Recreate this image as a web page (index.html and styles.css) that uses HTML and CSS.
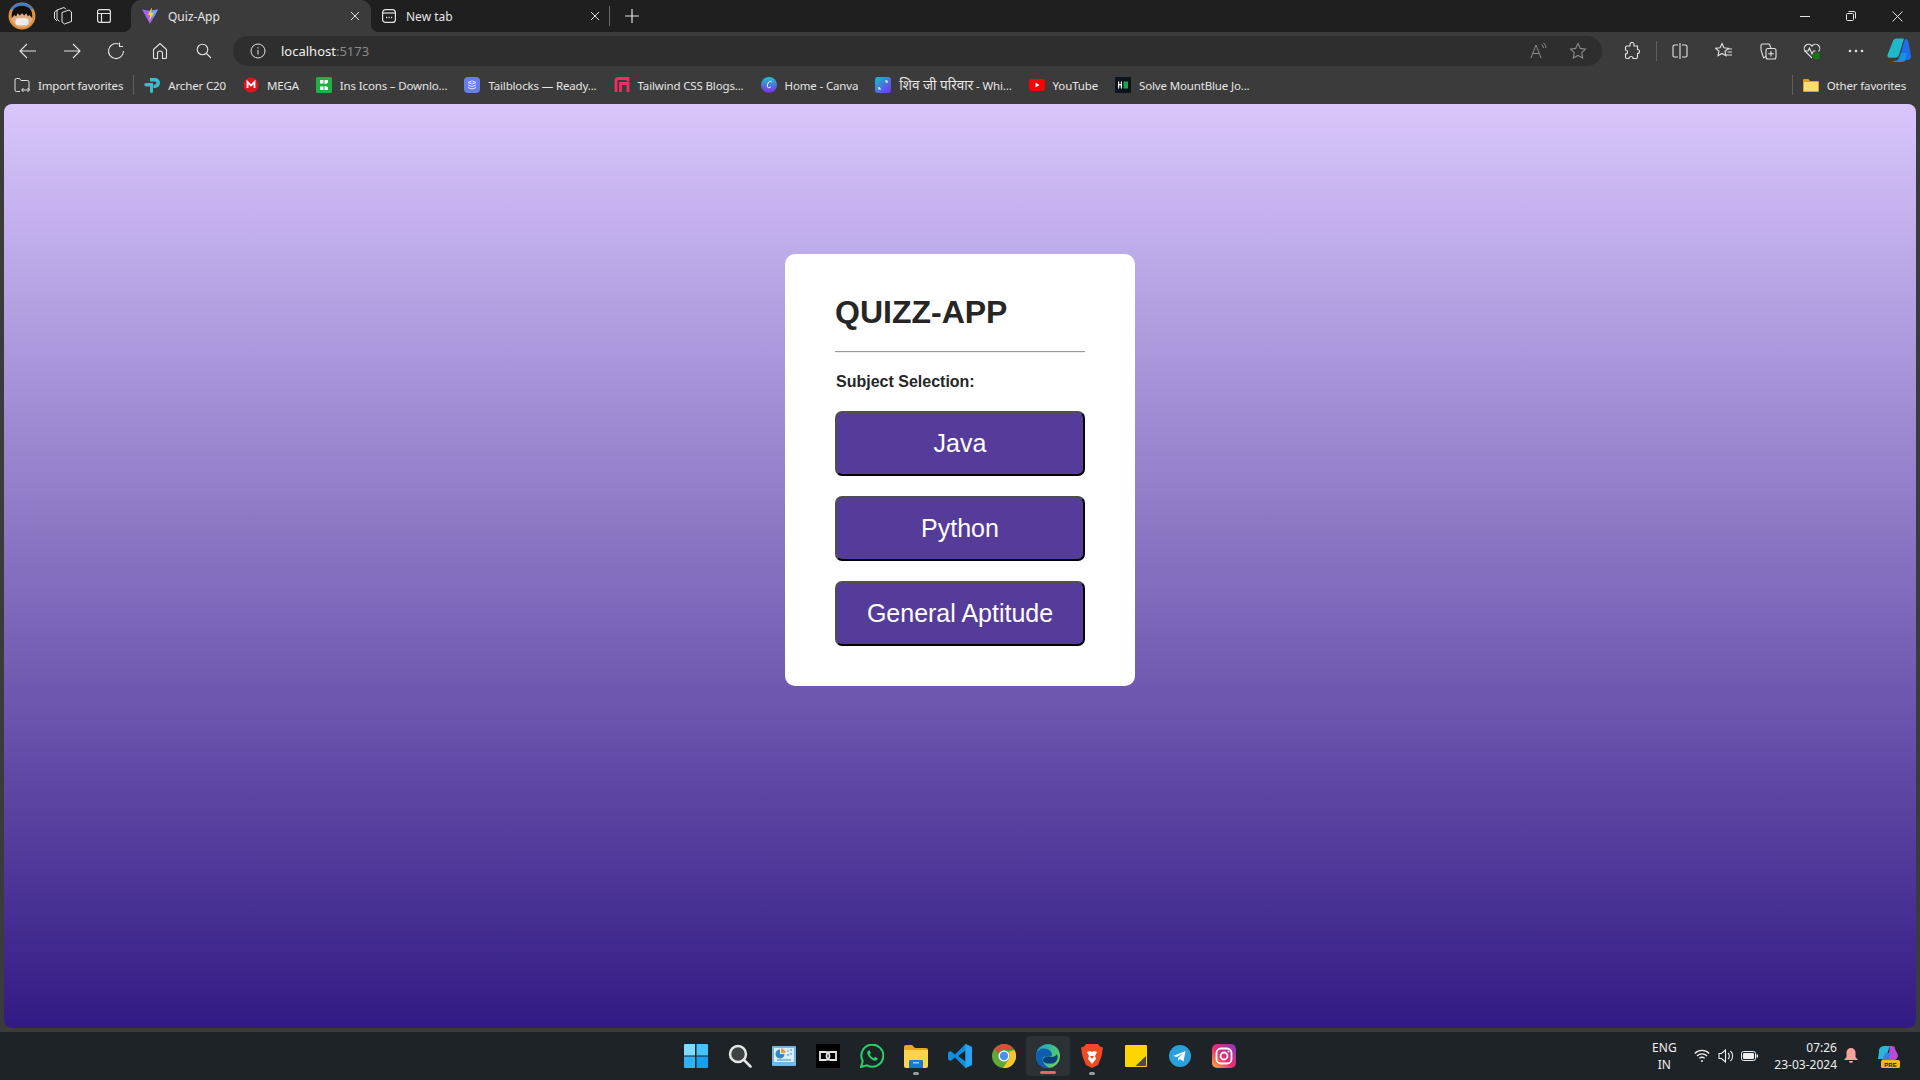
FILE: index.html
```html
<!DOCTYPE html>
<html lang="en">
<head>
    <meta charset="UTF-8">
    <meta name="viewport" content="width=device-width, initial-scale=1.0">
    <title>Quiz-App</title>
    <link rel="stylesheet" href="styles.css">
</head>
<body>
    <!-- title bar -->
    <div class="tabstrip">
        <div class="strip-btn strip-avatar">
            <svg width="28" height="28" viewBox="0 0 26 26"><circle cx="13" cy="13" r="12.500" fill="#e0913a"/><path d="M2.200 7a12.500 12.500 0 0 1 21.600 0z" fill="#3d7ecb"/><circle cx="13" cy="13.500" r="10" fill="#e2ad85"/><path d="M3.500 15c-1-8 3.500-11.500 9.500-11.500S23.500 7 22.500 15l-2.500-3-1.500 1.500-1.500-3-2 2-2-2-2 2-2-2-1.500 3-1.500-1.500z" fill="#15100e"/><rect x="7" y="15" width="12" height="6.500" rx="2.500" fill="#ececec"/></svg>
        </div>
        <div class="strip-btn">
            <svg width="20" height="20" viewBox="0 0 20 20" fill="none" stroke="#e3e3e3" stroke-width="1"><path d="M9 6.500l7-2.500 2.500 2v9.500l-7 2.500-2.500-2z"/><path d="M6.500 15.500L4 13V4l7-2.500 2 1.700"/><path d="M4 15l-2.500-2.500V6L4 4"/></svg>
        </div>
        <div class="strip-btn">
            <svg width="16" height="16" viewBox="0 0 16 16" fill="none" stroke="#e3e3e3" stroke-width="1.200"><rect x="1.600" y="1.600" width="12.800" height="12.800" rx="2"/><path d="M1.600 5.500h12.800M5.500 5.500v8.900"/></svg>
        </div>
        <div class="tab tab-active">
            <svg class="tab-icon" width="18" height="18" viewBox="0 0 18 18"><path d="M1 2.500l8 1.300 8-1.300L9 17z" fill="#9d63f5"/><path d="M9 3.800l8-1.300-5 8.700z" fill="#6fa8f7"/><path d="M10.500 1L6.800 8l2.400.3-.9 6 4.200-8-2.500-.3 1-5z" fill="#ffd02e"/></svg>
            <span class="tab-title">Quiz-App</span>
            <svg class="tab-close" width="10" height="10" viewBox="0 0 10 10" stroke="#e3e3e3" stroke-width="1"><path d="M1 1l8 8M9 1l-8 8"/></svg>
        </div>
        <div class="tab">
            <svg class="tab-icon" width="16" height="16" viewBox="0 0 16 16" fill="none" stroke="#e3e3e3" stroke-width="1.200"><rect x="1.600" y="1.600" width="12.800" height="12.800" rx="3"/><path d="M1.600 5h12.800"/><path d="M5 9.500h1.200M7.500 9.500h1.200M10 9.500h1.200" stroke-width="1.500"/></svg>
            <span class="tab-title">New tab</span>
            <svg class="tab-close" width="10" height="10" viewBox="0 0 10 10" stroke="#e3e3e3" stroke-width="1"><path d="M1 1l8 8M9 1l-8 8"/></svg>
        </div>
        <div class="tab-sep"></div>
        <div class="new-tab">
            <svg width="14" height="14" viewBox="0 0 14 14" stroke="#e3e3e3" stroke-width="1.200"><path d="M7 0v14M0 7h14"/></svg>
        </div>
        <div class="window-btns">
            <div class="window-btn"><svg width="10" height="10" viewBox="0 0 10 10" stroke="#e3e3e3"><path d="M0 5.500h10"/></svg></div>
            <div class="window-btn"><svg width="10" height="10" viewBox="0 0 10 10" fill="none" stroke="#e3e3e3"><rect x="0.500" y="2.500" width="7" height="7" rx="1"/><path d="M2.500 .5h5.500a1.500 1.500 0 0 1 1.500 1.500v5.500"/></svg></div>
            <div class="window-btn"><svg width="11" height="11" viewBox="0 0 11 11" stroke="#e3e3e3"><path d="M.5 .5l10 10M10.500 .5l-10 10"/></svg></div>
        </div>
    </div>

    <!-- address bar -->
    <div class="toolbar">
        <div class="tool-btn"><svg width="18" height="16" viewBox="0 0 18 16" fill="none" stroke="#e3e3e3" stroke-width="1.100"><path d="M17 8H1M8 1L1 8l7 7"/></svg></div>
        <div class="tool-btn"><svg width="18" height="16" viewBox="0 0 18 16" fill="none" stroke="#e3e3e3" stroke-width="1.100"><path d="M1 8h16M10 1l7 7-7 7"/></svg></div>
        <div class="tool-btn"><svg width="18" height="18" viewBox="0 0 18 18" fill="none" stroke="#e3e3e3" stroke-width="1.100"><path d="M11.500 2A7.500 7.500 0 1 0 16.500 9"/><path d="M12.500 .5V4.500H16"/></svg></div>
        <div class="tool-btn"><svg width="18" height="18" viewBox="0 0 18 18" fill="none" stroke="#e3e3e3" stroke-width="1.100"><path d="M2.500 7.500L9 1.500l6.500 6v8a1 1 0 0 1-1 1h-3v-5a2.500 2.500 0 0 0-5 0v5h-3a1 1 0 0 1-1-1z"/></svg></div>
        <div class="tool-btn"><svg width="16" height="16" viewBox="0 0 16 16" fill="none" stroke="#e3e3e3" stroke-width="1.100"><circle cx="6.500" cy="6.500" r="5.300"/><path d="M10.500 10.500L15 15"/></svg></div>
        <div class="address">
            <svg width="16" height="16" viewBox="0 0 16 16" fill="none" stroke="#e3e3e3" stroke-width="1"><circle cx="8" cy="8" r="7"/><path d="M8 7v4.500M8 4.200v1.300"/></svg>
            <span class="url">localhost<span class="url-port">:5173</span></span>
            <div class="address-end">
                <svg width="18" height="18" viewBox="0 0 18 18" fill="none" stroke="#8a8a8a" stroke-width="1"><path d="M1 16L6 3l5 13M2.800 11.500h6.400M11.500 2.500a5 5 0 0 1 2 3.500M13.500 1a7 7 0 0 1 2.500 5"/></svg>
                <svg width="18" height="18" viewBox="0 0 18 18" fill="none" stroke="#8a8a8a" stroke-width="1.100"><path d="M9 1.500l2.300 4.900 5.200.7-3.800 3.600 1 5.300L9 13.400 4.300 16l1-5.300L1.500 7.100l5.200-.7z"/></svg>
            </div>
        </div>
        <div class="tool-btn"><svg width="18" height="18" viewBox="0 0 18 18" fill="none" stroke="#e3e3e3" stroke-width="1.100"><path d="M7 2.500a2 2 0 0 1 4 0V4h3.500v3.500a2 2 0 0 1 0 4V15a1.500 1.500 0 0 1-1.500 1.500H10a2 2 0 0 0-4 0H4A1.500 1.500 0 0 1 2.500 15v-3a2 2 0 0 0 0-4V5.500A1.500 1.500 0 0 1 4 4h3z"/></svg></div>
        <div class="tool-sep"></div>
        <div class="tool-btn"><svg width="16" height="16" viewBox="0 0 16 16" fill="none" stroke="#e3e3e3" stroke-width="1.100"><path d="M8 0v16M6 2H2.500A1.500 1.500 0 0 0 1 3.500v9A1.500 1.500 0 0 0 2.500 14H6M10 2h3.500A1.500 1.500 0 0 1 15 3.500v9a1.500 1.500 0 0 1-1.500 1.500H10"/></svg></div>
        <div class="tool-btn"><svg width="18" height="18" viewBox="0 0 18 18" fill="none" stroke="#e3e3e3" stroke-width="1.100"><path d="M7 1.500l1.900 4.300 4.400.5-3.300 3 1 4.400L7 11.400l-4 2.300 1-4.400-3.300-3 4.400-.5zM12 7h5M12.500 10h4.500M11.500 13h5.500"/></svg></div>
        <div class="tool-btn"><svg width="18" height="18" viewBox="0 0 18 18" fill="none" stroke="#e3e3e3" stroke-width="1.100"><path d="M7 14.500l-2.500 1.300L2 8V3.500A1.500 1.500 0 0 1 3.500 2h6.800L12 6"/><rect x="7" y="6.500" width="10" height="10.500" rx="2"/><path d="M12 9v5.500M9.200 11.800h5.600"/></svg></div>
        <div class="tool-btn"><svg width="18" height="18" viewBox="0 0 18 18" fill="none" stroke="#e3e3e3" stroke-width="1.100"><path d="M9 16L2.500 9.500a4.200 4.200 0 0 1 6-6l.5.700.5-.7a4.200 4.200 0 0 1 6 6"/><path d="M1 9h4l1.500-3 2.500 6 1.500-3h2"/><circle cx="13.500" cy="14" r="3.500" fill="#107c10" stroke="none"/></svg></div>
        <div class="tool-btn"><svg width="16" height="4" viewBox="0 0 16 4" fill="#e3e3e3"><circle cx="2" cy="2" r="1.300"/><circle cx="8" cy="2" r="1.300"/><circle cx="14" cy="2" r="1.300"/></svg></div>
        <div class="tool-btn copilot-btn"><svg width="24" height="26" viewBox="0 0 24 26"><path d="M6 3a3 3 0 0 1 3-2.500h8L12 17a4 4 0 0 1-3.500 2.800H2.500a2.500 2.500 0 0 1-2-3z" fill="#1fb8c8"/><path d="M18 1c2 0 3 1 3.400 3L24 18a4 4 0 0 1-4 4h-8l5-18z" fill="#1c6fe8"/><path d="M5 24h10a4 4 0 0 0 4-3l1-6-6 0-3 7z" fill="#1a8fe8"/></svg></div>
    </div>

    <!-- favorites bar -->
    <div class="bookmarks">
        <div class="bookmark bookmark-import">
            <svg width="16" height="16" viewBox="0 0 16 16" fill="none" stroke="#e3e3e3" stroke-width="1"><path d="M6 14.500H2.500A1.500 1.500 0 0 1 1 13V3a1.500 1.500 0 0 1 1.500-1.500h3L7 3.500h6.500A1.500 1.500 0 0 1 15 5v8"/><path d="M8 13h7M9.500 11L7.500 13l2 2M13.500 11l2 2-2 2"/></svg>
            <span>Import favorites</span>
        </div>
        <div class="bookmark-sep"></div>
        <div class="bookmark">
            <svg width="16" height="16" viewBox="0 0 16 16"><path d="M6 1h5a5 5 0 0 1 0 10H9.500V7.500H11a1.500 1.500 0 0 0 0-3H6z" fill="#35c0d0"/><path d="M6 6h3v8.500a1.500 1.500 0 0 1-3 0V9.500H2a1.700 1.700 0 0 1 0-3.500z" fill="#35c0d0"/></svg>
            <span>Archer C20</span>
        </div>
        <div class="bookmark">
            <svg width="16" height="16" viewBox="0 0 16 16"><circle cx="8" cy="8" r="7.500" fill="#e3131b"/><path d="M4.500 11V5L8 8.500 11.500 5v6" fill="none" stroke="#fff" stroke-width="1.800"/></svg>
            <span>MEGA</span>
        </div>
        <div class="bookmark">
            <svg width="16" height="16" viewBox="0 0 16 16"><rect width="16" height="16" rx="1.500" fill="#1fb141"/><path d="M4 3h3.500v3.500H4zM8.500 3H12v3h-1.500v1H8.500zM4 9.500h3.500V13H4zM8.500 9h2v1H12v3H8.500z" fill="#fff"/></svg>
            <span>Ins Icons – Downlo...</span>
        </div>
        <div class="bookmark">
            <svg width="16" height="16" viewBox="0 0 16 16"><rect width="16" height="16" rx="4" fill="#667eea"/><path d="M4 5.500L8 4l4 1.500L8 7zM4 8l4 1.500L12 8M4 10.500L8 12l4-1.500" fill="none" stroke="#e5e9ff" stroke-width="1"/></svg>
            <span>Tailblocks — Ready...</span>
        </div>
        <div class="bookmark">
            <svg width="16" height="16" viewBox="0 0 16 16" fill="none" stroke="#f02e65" stroke-width="2.800"><path d="M2 15V3.500A2 2 0 0 1 4 1.500h10v3"/><path d="M6.500 15V6.500H14V15"/></svg>
            <span>Tailwind CSS Blogs...</span>
        </div>
        <div class="bookmark">
            <svg width="16" height="16" viewBox="0 0 16 16"><defs><linearGradient id="canva-fill" x1="0" y1="0" x2="0" y2="1"><stop offset="0" stop-color="#20c4cb"/><stop offset="1" stop-color="#7d2ae8"/></linearGradient></defs><circle cx="8" cy="8" r="8" fill="url(#canva-fill)"/><path d="M10.500 5c-.5-1-2-.8-3 .5s-1.500 3.500-.8 4.700c.7 1 2.300.5 3.300-.5" fill="none" stroke="#fff" stroke-width="1"/></svg>
            <span>Home - Canva</span>
        </div>
        <div class="bookmark">
            <svg width="16" height="16" viewBox="0 0 16 16"><defs><linearGradient id="shiv-fill" x1="0" y1="0" x2="1" y2="1"><stop offset="0" stop-color="#12c2c9"/><stop offset="1" stop-color="#7a2ff0"/></linearGradient></defs><rect width="16" height="16" rx="3" fill="url(#shiv-fill)"/><path d="M10 4h2v2M4 10v2h2" fill="none" stroke="#fff" stroke-width="1.200"/></svg>
            <span><span class="hindi">शिव जी परिवार</span> - Whi...</span>
        </div>
        <div class="bookmark">
            <svg width="16" height="16" viewBox="0 0 16 16"><rect y="2" width="16" height="12" rx="3" fill="#f00"/><path d="M6.500 5.500v5l4-2.500z" fill="#fff"/></svg>
            <span>YouTube</span>
        </div>
        <div class="bookmark">
            <svg width="16" height="16" viewBox="0 0 16 16"><rect width="16" height="16" fill="#0e141e"/><path d="M3 4.500h1.200v2.600h1.600V4.500H7v7H5.800V8.400H4.200v3.100H3z" fill="#fff"/><rect x="8.500" y="4.500" width="4.500" height="7" fill="#1ba94c"/></svg>
            <span>Solve MountBlue Jo...</span>
        </div>
        <div class="bookmark-other">
            <div class="bookmark-sep"></div>
            <div class="bookmark">
                <svg width="16" height="16" viewBox="0 0 16 16"><path d="M0 3a1 1 0 0 1 1-1h4.500L7 4h8a1 1 0 0 1 1 1v9a1 1 0 0 1-1 1H1a1 1 0 0 1-1-1z" fill="#d9a125"/><rect x="1" y="5" width="14" height="9" rx=".5" fill="#ffdb74"/></svg>
                <span>Other favorites</span>
            </div>
        </div>
    </div>

    <!-- page -->
    <div class="viewport">
        <div class="quiz-card">
            <h1 class="quiz-title">QUIZZ-APP</h1>
            <hr class="quiz-rule">
            <p class="quiz-label">Subject Selection:</p>
            <div class="subject-list">
                <button class="subject-btn">Java</button>
                <button class="subject-btn">Python</button>
                <button class="subject-btn">General Aptitude</button>
            </div>
        </div>
    </div>

    <!-- taskbar -->
    <div class="taskbar">
        <div class="task-icons">
            <div class="task-icon"><svg width="24" height="24" viewBox="0 0 24 24"><path d="M0 1a1 1 0 0 1 1-1h10v11.500H0z" fill="#7fdcff"/><path d="M12.500 0H23a1 1 0 0 1 1 1v10.500H12.500z" fill="#45c4fb"/><path d="M0 12.500h11V24H1a1 1 0 0 1-1-1z" fill="#2cb4f5"/><path d="M12.500 12.500H24V23a1 1 0 0 1-1 1H12.500z" fill="#13a0ee"/></svg></div>
            <div class="task-icon"><svg width="24" height="24" viewBox="0 0 24 24" fill="none"><circle cx="10" cy="10" r="8" fill="#3c4245" stroke="#e6e6e6" stroke-width="2.500"/><path d="M16 16l6.500 6.500" stroke="#e6e6e6" stroke-width="2.500" stroke-linecap="round"/></svg></div>
            <div class="task-icon"><svg width="24" height="20" viewBox="0 0 24 20"><rect width="24" height="20" rx="1" fill="#6fb8e8"/><rect x="2" y="2" width="20" height="14" fill="#d8eefa"/><path d="M8 3.500a4.500 4.500 0 1 0 4.500 4.500H8z" fill="#2f8ac8"/><path d="M9 2.500a4.500 4.500 0 0 1 4.500 4.500H9z" fill="#f39c2c"/><path d="M15 5h1.500M18 4h2M15 9h2M18 8h2M5 14h14" stroke="#3a8fcc"/></svg></div>
            <div class="task-icon"><svg width="24" height="24" viewBox="0 0 24 24"><rect width="24" height="24" fill="#000"/><path d="M4 8h5.500a4 4 0 0 1 0 8H4zM20 8h-5.500a4 4 0 0 0 0 8H20z" fill="none" stroke="#e6e6e6" stroke-width="1.800"/></svg></div>
            <div class="task-icon"><svg width="24" height="24" viewBox="0 0 24 24"><path d="M1 23l1.700-6A11 11 0 1 1 7 21.300z" fill="none" stroke="#25d366" stroke-width="2"/><path d="M8.500 6.500c-1 .5-1.500 2-1 3.500 1 3 3.500 5.500 6.500 6.500 1.500.5 3 0 3.500-1.200.2-.6.2-1 0-1.200l-2.500-1.200-1.200 1.300c-1.700-.6-3.300-2.200-4-4l1.100-1.100-1.100-2.600z" fill="#25d366"/></svg></div>
            <div class="task-icon task-open"><svg width="24" height="23" viewBox="0 0 24 23"><path d="M0 2a2 2 0 0 1 2-2h6l3 3h11a2 2 0 0 1 2 2v3H0z" fill="#e8a820"/><path d="M0 5h24v16a2 2 0 0 1-2 2H2a2 2 0 0 1-2-2z" fill="#ffd34e"/><path d="M6 15h12a1 1 0 0 1 1 1v7H5v-7a1 1 0 0 1 1-1z" fill="#1a78d0"/><rect x="9" y="17" width="6" height="1.500" fill="#8fd0f8"/></svg></div>
            <div class="task-icon"><svg width="24" height="24" viewBox="0 0 24 24"><path d="M17.500 0L24 3v18l-6.500 3L7 13.500 2.500 17 0 15.500V8.500L2.500 7 7 10.500z" fill="#0f8ee0"/><path d="M17.500 6.500v11L10 12z" fill="#1d2326"/><path d="M17.500 0L24 3v18l-6.500 3z" fill="#28a5f0"/></svg></div>
            <div class="task-icon"><svg width="24" height="24" viewBox="0 0 24 24"><circle cx="12" cy="12" r="12" fill="#5fa83a"/><path d="M12 0a12 12 0 0 1 10.400 6H12a6 6 0 0 0-5.600 3.800L2.600 5.500A12 12 0 0 1 12 0z" fill="#e04a3a"/><path d="M22.400 6A12 12 0 0 1 11 24l5.200-7.800A6 6 0 0 0 16.500 8z" fill="#fbc52d"/><circle cx="12" cy="12" r="5.500" fill="#fff"/><circle cx="12" cy="12" r="4.200" fill="#4a8ff0"/></svg></div>
            <div class="task-icon task-active">
                <svg width="24" height="24" viewBox="0 0 24 24"><defs><linearGradient id="edge-fill" x1="0" y1="0" x2="1" y2="0.600"><stop offset="0" stop-color="#0f9fd8"/><stop offset="1" stop-color="#5fd35a"/></linearGradient></defs><circle cx="12" cy="12" r="12" fill="url(#edge-fill)"/><path d="M0 12c0-5 4-7.500 8-7.500 5 0 8 3.500 8 6 0 1.500-1.500 2.500-3.500 2.500-2.500 0-6-1-6 2.500 0 3 3 6.500 7 8.500-7 1.500-13.500-4-13.500-12z" fill="#0c5fb0"/><path d="M7 16c0-4 5-3 8-3 3 0 5-1 6-3 2 5-1 9-4.500 9.500C11 20 7 19 7 16z" fill="#0b3f7c"/></svg>
            </div>
            <div class="task-icon task-open"><svg width="24" height="24" viewBox="0 0 24 24"><path d="M6 0h12l2 2.500 3 1-1.500 9L18 21l-6 3-6-3-3.500-8.500L1 3.500l3-1z" fill="#f04a23"/><path d="M7 8l3-1 2 1 2-1 3 1-2 4 1 3-4 5-4-5 1-3z" fill="#fff"/><path d="M10 12h4l-2 3z" fill="#f04a23"/></svg></div>
            <div class="task-icon"><svg width="22" height="22" viewBox="0 0 22 22"><rect width="22" height="22" rx="1" fill="#ffd500"/><path d="M21 11v10H10.500z" fill="#4a4a4a"/></svg></div>
            <div class="task-icon"><svg width="22" height="22" viewBox="0 0 22 22"><circle cx="11" cy="11" r="11" fill="#2aa1da"/><path d="M4 11l12.500-5-2 10.500-3.500-2.500-2 1.800.2-3 5-4.500-6.300 3.800z" fill="#fff"/></svg></div>
            <div class="task-icon"><svg width="24" height="24" viewBox="0 0 24 24"><defs><linearGradient id="ig-fill" x1="0" y1="1" x2="1" y2="0"><stop offset="0" stop-color="#fdb53a"/><stop offset="0.450" stop-color="#ee2a6f"/><stop offset="1" stop-color="#7a3fc8"/></linearGradient></defs><rect width="24" height="24" rx="5" fill="url(#ig-fill)"/><rect x="4.500" y="4.500" width="15" height="15" rx="4.500" fill="none" stroke="#fff" stroke-width="1.800"/><circle cx="12" cy="12" r="3.500" fill="none" stroke="#fff" stroke-width="1.800"/><circle cx="16.500" cy="7.500" r="1" fill="#fff"/></svg></div>
        </div>
        <div class="tray">
            <div class="tray-lang">ENG<br>IN</div>
            <svg class="tray-wifi" width="16" height="14" viewBox="0 0 16 14" fill="none" stroke="#f0f0f0" stroke-width="1.300"><path d="M.8 4.500a10 10 0 0 1 14.400 0M3 7a7 7 0 0 1 10 0M5.300 9.400a3.800 3.800 0 0 1 5.400 0"/><circle cx="8" cy="12" r="1" fill="#f0f0f0" stroke="none"/></svg>
            <svg class="tray-sound" width="17" height="14" viewBox="0 0 17 14" fill="none" stroke="#f0f0f0" stroke-width="1.100"><path d="M1 4.500h2.500L7.500 1v12L3.500 9.500H1zM10 4a4 4 0 0 1 0 6M12.500 2a7 7 0 0 1 0 10"/></svg>
            <svg class="tray-battery" width="17" height="10" viewBox="0 0 17 10"><rect x=".5" y=".5" width="14" height="9" rx="2" fill="none" stroke="#f0f0f0"/><rect x="2" y="2" width="11" height="6" rx="1" fill="#f0f0f0"/><rect x="15.500" y="3.500" width="1.500" height="3" fill="#f0f0f0"/></svg>
            <div class="tray-clock">07:26<br>23-03-2024</div>
            <svg class="tray-bell" width="14" height="16" viewBox="0 0 14 16" fill="#f9a298"><path d="M7 0a4.500 4.500 0 0 1 4.500 4.500V9l2.500 3H0l2.500-3V4.500A4.500 4.500 0 0 1 7 0zM5 13h4a2 2 0 0 1-4 0z"/></svg>
            <svg class="tray-copilot" width="24" height="24" viewBox="0 0 24 24"><path d="M3 8a5 5 0 0 1 5-6h6l-5 13H2z" fill="#28b8d8"/><path d="M14 2h2a3 3 0 0 1 3 3l3 6c0 3-2 5-4 5h-6z" fill="#c04ad8"/><path d="M9 9h6l-2 7H6z" fill="#3c7ee8"/><rect x="5" y="16" width="19" height="8" rx="1.500" fill="#f5b81e"/><text x="14.500" y="22.500" text-anchor="middle" class="pre-text">PRE</text></svg>
        </div>
    </div>
</body>
</html>
```

FILE: styles.css
```css
* {
    box-sizing: border-box;
}
body {
    margin: 0;
    height: 100vh;
    overflow: hidden;
    display: flex;
    flex-direction: column;
    background: #3b3b3b;
    color: #e6e6e6;
    font-family: "Noto Sans", "Liberation Sans", sans-serif;
    font-size: 12px;
}
svg {
    display: block;
    flex: none;
}

/* tab strip */
.tabstrip {
    display: flex;
    align-items: center;
    height: 32px;
    flex: none;
    background: #1f1f1f;
}
.strip-btn {
    width: 41px;
    height: 32px;
    display: flex;
    align-items: center;
    justify-content: center;
}
.strip-avatar {
    margin-left: 1px;
}
.tab {
    position: relative;
    width: 240px;
    height: 32px;
    display: flex;
    align-items: center;
    padding: 0 11px 0 10px;
}
.tab-active {
    margin-left: 7px;
    background: #3b3b3b;
    border-radius: 10px 10px 0 0;
}
.tab-active::before,
.tab-active::after {
    content: "";
    position: absolute;
    bottom: 0;
    width: 8px;
    height: 8px;
}
.tab-active::before {
    left: -8px;
    background: radial-gradient(circle at 0 0, #1f1f1f 8px, #3b3b3b 8.5px);
}
.tab-active::after {
    right: -8px;
    background: radial-gradient(circle at 100% 0, #1f1f1f 8px, #3b3b3b 8.5px);
}
.tab-title {
    flex: 1;
    margin-left: 9px;
}
.tab-sep {
    width: 1px;
    height: 20px;
    margin-left: -2px;
    background: #6a6a6a;
}
.new-tab {
    width: 44px;
    display: flex;
    justify-content: center;
}
.window-btns {
    display: flex;
    margin-left: auto;
}
.window-btn {
    width: 46px;
    height: 32px;
    display: flex;
    align-items: center;
    justify-content: center;
}

/* toolbar */
.toolbar {
    display: flex;
    align-items: center;
    height: 34px;
    flex: none;
    padding: 4px 0 0 6px;
    background: #3b3b3b;
}
.tool-btn {
    width: 44px;
    height: 30px;
    flex: none;
    display: flex;
    align-items: center;
    justify-content: center;
}
.copilot-btn {
    width: 42px;
}
.address {
    flex: 1;
    height: 30px;
    margin: 0 8px 0 7px;
    padding: 0 15px 0 17px;
    display: flex;
    align-items: center;
    background: #2e2e2e;
    border-radius: 15px;
}
.url {
    margin-left: 15px;
    font-size: 13px;
    color: #f0f0f0;
}
.url-port {
    color: #8a8a8a;
}
.address-end {
    margin-left: auto;
    display: flex;
    gap: 21px;
}
.tool-sep {
    width: 1px;
    height: 20px;
    margin: 0 1px 0 2px;
    background: #5f5f5f;
}

/* favorites */
.bookmarks {
    display: flex;
    align-items: center;
    gap: 17px;
    height: 38px;
    flex: none;
    padding: 0 14px 0 14px;
    background: #3b3b3b;
    font-size: 11.5px;
    letter-spacing: -0.15px;
}
.bookmark {
    display: flex;
    align-items: center;
    gap: 8px;
    white-space: nowrap;
}
.bookmark-sep {
    width: 1px;
    height: 20px;
    margin: 0 -7px;
    background: #5f5f5f;
}
.bookmark-other {
    display: flex;
    align-items: center;
    gap: 17px;
    margin-left: auto;
}
.hindi {
    font-size: 13.5px;
    letter-spacing: 0;
}

/* page */
.viewport {
    flex: 1;
    margin: 0 4px;
    padding-top: 150px;
    display: flex;
    justify-content: center;
    align-items: flex-start;
    background: linear-gradient(#d8c6fc, #321a84);
    border-radius: 8px;
    font-family: "Liberation Sans", Arial, sans-serif;
}
.quiz-card {
    width: 350px;
    padding: 40px 50px;
    background: #fff;
    border-radius: 10px;
    color: #262626;
}
.quiz-title {
    margin: 0;
    font-size: 32px;
    line-height: 37px;
}
.quiz-rule {
    margin: 20px 0 0;
    height: 2px;
    border: 0;
    border-top: 1px solid #999;
    border-bottom: 1px solid #eee;
}
.quiz-label {
    margin: 20px 0 0 1px;
    font-size: 16px;
    line-height: 18px;
    font-weight: bold;
}
.subject-list {
    display: flex;
    flex-direction: column;
    gap: 20px;
    margin-top: 20px;
}
.subject-btn {
    height: 65px;
    padding: 0;
    font-family: inherit;
    font-size: 25px;
    color: #fff;
    background: #553c9a;
    border: 2px solid;
    border-color: #4f4f4f #000 #000 #4f4f4f;
    border-radius: 7px;
}

/* taskbar */
.taskbar {
    position: relative;
    display: flex;
    align-items: center;
    height: 48px;
    flex: none;
    margin-top: 4px;
    background: #1d2326;
}
.task-icons {
    display: flex;
    margin-left: 674px;
}
.task-icon {
    position: relative;
    width: 44px;
    height: 40px;
    display: flex;
    align-items: center;
    justify-content: center;
}
.task-open::after,
.task-active::after {
    content: "";
    position: absolute;
    bottom: 1px;
    left: 50%;
    width: 6px;
    height: 3px;
    margin-left: -3px;
    border-radius: 2px;
    background: #9a9a9a;
}
.task-active {
    background: #2b3134;
    border-radius: 4px;
}
.task-active::after {
    bottom: 2px;
    width: 16px;
    margin-left: -8px;
    background: #f0606a;
}
.tray {
    display: flex;
    align-items: center;
    margin-left: auto;
    color: #f0f0f0;
    font-size: 12px;
    line-height: 17px;
}
.tray-lang {
    width: 30px;
    margin-right: 15px;
    text-align: center;
}
.tray-wifi {
    margin-right: 8px;
}
.tray-sound {
    margin-right: 6px;
}
.tray-battery {
    margin-right: 16px;
}
.tray-clock {
    text-align: right;
    margin-right: 7px;
}
.tray-bell {
    margin-right: 18px;
}
.tray-copilot {
    margin-right: 20px;
}
.pre-text {
    font-family: "Liberation Sans", sans-serif;
    font-size: 6px;
    font-weight: bold;
    fill: #1d2326;
}
```
